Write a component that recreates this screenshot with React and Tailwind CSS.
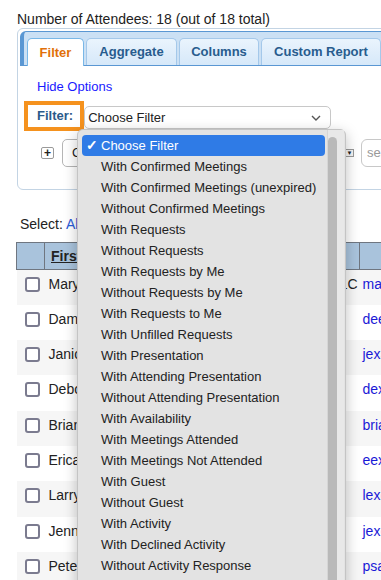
import React from "react";

const filters = [
  "Choose Filter",
  "With Confirmed Meetings",
  "With Confirmed Meetings (unexpired)",
  "Without Confirmed Meetings",
  "With Requests",
  "Without Requests",
  "With Requests by Me",
  "Without Requests by Me",
  "With Requests to Me",
  "With Unfilled Requests",
  "With Presentation",
  "With Attending Presentation",
  "Without Attending Presentation",
  "With Availability",
  "With Meetings Attended",
  "With Meetings Not Attended",
  "With Guest",
  "Without Guest",
  "With Activity",
  "With Declined Activity",
  "Without Activity Response",
  "With Notes",
];

const attendees = [
  { name: "Mary", company: "Consulting Group LLC", email: "maryexample@demo.com" },
  { name: "Damian", company: "", email: "deexample@demo.com" },
  { name: "Janice", company: "", email: "jexample@demo.com" },
  { name: "Deborah", company: "", email: "dexample@demo.com" },
  { name: "Brian", company: "", email: "brianexample@demo.com" },
  { name: "Erica", company: "", email: "eexample@demo.com" },
  { name: "Larry", company: "", email: "lexexample@demo.com" },
  { name: "Jennifer", company: "", email: "jexexample@demo.com" },
  { name: "Peter", company: "", email: "psample@demo.com" },
];

const tabs = [
  { label: "Filter", width: "w-[57px]", active: true },
  { label: "Aggregate", width: "w-[91px]" },
  { label: "Columns", width: "w-[80px]" },
  { label: "Custom Report", width: "w-[120px]" },
];

function Chevron() {
  return (
    <svg width="10" height="6" viewBox="0 0 10 6" fill="none">
      <path d="M1 1l4 4 4-4" stroke="#555" strokeWidth="1.4" />
    </svg>
  );
}

function App() {
  return (
    <div className="relative w-[381px] h-[580px] overflow-hidden bg-white text-[#222] font-['Liberation_Sans',Arial,sans-serif]">
      <div className="w-[540px] pl-[17px] pt-[11px]">
        <p className="text-[14px] leading-[16px]">
          Number of Attendees: 18 (out of 18 total)
        </p>

        {/* tabs panel */}
        <div className="mt-[1px] border border-[#c3d4e4] rounded-[6px] p-[2px]">
          <div className="h-[35px] flex items-end gap-[2px] pl-[3px] bg-[#cbe0f4] border border-[#5a97d3] border-l-[4px] rounded-tl-[6px] rounded-tr-[6px]">
            {tabs.map((t) => (
              <div
                key={t.label}
                className={
                  t.active
                    ? "shrink-0 h-[28px] -mb-[1px] flex items-center justify-center rounded-t-[5px] border border-b-0 border-[#79b7e7] bg-white text-[#e17009] text-[13px] font-bold " + t.width
                    : "shrink-0 h-[27px] flex items-center justify-center rounded-t-[5px] border border-b-0 border-[#a4c8ea] bg-[linear-gradient(to_bottom,#eaf4fd,#d6e8f9)] text-[#285c8e] text-[13px] font-bold " + t.width
                }
              >
                {t.label}
              </div>
            ))}
          </div>

          <div className="pl-[17px] pt-[13px] pb-[20px]">
            <a className="block text-[13px] leading-[16px] text-[#1a1aff]">
              Hide Options
            </a>
            <div className="mt-[6px] flex items-start">
              <div className="shrink-0 -ml-[13px] h-[30px] border-[4px] border-[#f5921e] pl-[9px] pr-[7px] flex items-center text-[13px] font-bold text-[#2b5a8a]">
                Filter:
              </div>
              <div className="shrink-0 mt-[5px] w-[247px] h-[23px] border border-[#c8c8c8] rounded-[5px] bg-white flex items-center justify-between pl-[3px] pr-[9px] text-[13px]">
                <span>Choose Filter</span>
                <Chevron />
              </div>
            </div>
            <div className="mt-[8px] flex items-center">
              <div className="shrink-0 ml-[4px] w-[13px] h-[12px] border border-[#9a9a9a] rounded-[2px] bg-white flex items-center justify-center text-[12px] leading-[12px] font-bold">
                +
              </div>
              <div className="shrink-0 ml-[8px] w-[280px] h-[28px] border border-[#b5b5b5] rounded-[5px] bg-white flex items-center pl-[9px] text-[13px]">
                Choose Field
              </div>
              <div className="shrink-0 ml-[3px] w-[9px] h-[8px] border border-[#999] bg-[#f4f4f4] flex items-center justify-center text-[6px] leading-none">
                ▼
              </div>
              <div className="shrink-0 ml-[7px] w-[120px] h-[28px] border border-[#c8c8c8] rounded-[6px] bg-white flex items-center pl-[5px] text-[13px] text-[#999]">
                search
              </div>
            </div>
          </div>
        </div>

        <p className="mt-[26px] pl-[3px] text-[14px] leading-[16px]">
          Select: <a className="text-[#2a5bd7]">All</a>{" "}
          <a className="text-[#2a5bd7]">None</a>
        </p>

        {/* attendees table */}
        <table className="mt-[10px] -ml-[1px] w-[503px] table-fixed border-collapse text-[14px] leading-[16px]">
          <colgroup>
            <col className="w-[28px]" />
            <col className="w-[120px]" />
            <col className="w-[195px]" />
            <col className="w-[160px]" />
          </colgroup>
          <thead>
            <tr className="h-[27px] bg-[#a9c3dc]">
              <th className="border border-[#6f7680]"></th>
              <th className="border border-[#6f7680] text-left pl-[6px] font-bold underline">
                First Name
              </th>
              <th className="border border-[#6f7680] text-left pl-[6px] font-bold underline">
                Company
              </th>
              <th className="border border-[#6f7680] text-center font-bold underline">
                Email
              </th>
            </tr>
          </thead>
          <tbody>
            {attendees.map((a, i) => (
              <tr
                key={a.name}
                className={i % 2 === 0 ? "h-[35.3px] bg-[#f6f6f6]" : "h-[35.3px] bg-white"}
              >
                <td className="align-top pl-[8px] pt-[7px]">
                  <div className="w-[15px] h-[15px] border-2 border-[#7b7b8f] rounded-[3px] bg-white" />
                </td>
                <td className="align-top pl-[4px] pt-[6px] whitespace-nowrap overflow-hidden">
                  {a.name}
                </td>
                <td className="align-top pr-[2px] pt-[6px] whitespace-nowrap overflow-hidden text-right">
                  {a.company}
                </td>
                <td className="align-top pl-[3px] pt-[6px] whitespace-nowrap overflow-hidden text-[#1a1ad6]">
                  {a.email}
                </td>
              </tr>
            ))}
          </tbody>
        </table>
      </div>

      {/* open select menu */}
      <div className="absolute left-[77px] top-[129px] w-[269px] h-[480px] rounded-[6px] border border-[#c4c4c4] bg-[#e3e3e3] shadow-[0_4px_14px_rgba(0,0,0,0.25)] flex">
        <div className="w-[249px] pt-[5px] pl-[4px]">
          {filters.map((f, i) => (
            <div
              key={f}
              className={
                i === 0
                  ? "h-[21px] w-[243px] rounded-[4px] bg-[#2f7be6] text-white flex items-center text-[13px]"
                  : "h-[21px] w-[243px] flex items-center text-[13px] text-[#222]"
              }
            >
              <span className="w-[19px] pl-[4px] text-[14px] font-bold">{i === 0 ? "✓" : ""}</span>
              {f}
            </div>
          ))}
        </div>
        <div className="w-[17px] pt-[7px] border-l border-[#d6d6d6] bg-[#e8e8e8]">
          <div className="w-[9px] h-[470px] rounded-full bg-[#b9b9b9]" />
        </div>
      </div>
    </div>
  );
}

export default App;
